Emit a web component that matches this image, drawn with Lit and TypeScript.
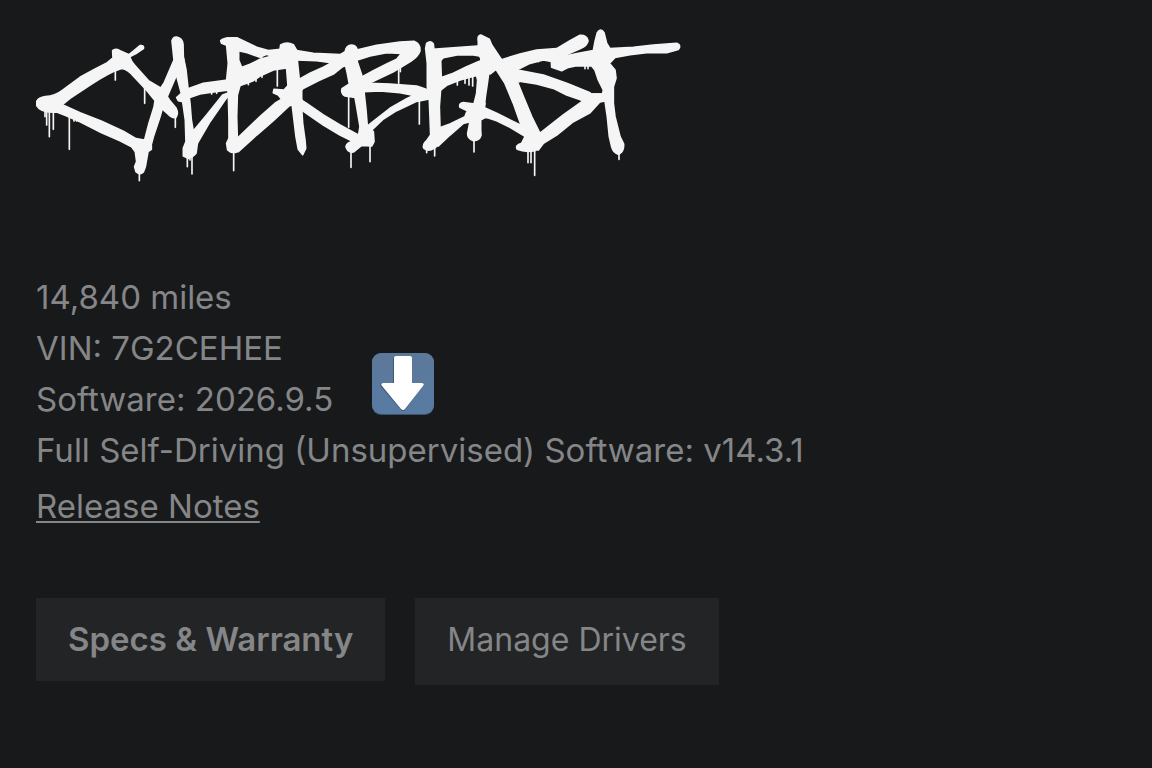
import { LitElement, html, css, svg } from "lit";
import { customElement } from "lit/decorators.js";

/* One slice of the sprayed logo: its left edge, its strokes and its paint drips [x, y1, y2]. */
interface Slice {
  x: number;
  strokes: string[];
  drips: number[][];
}

const SLICES: Slice[] = [
  {
    x: 30,
    strokes: [
      "M18 252Q20 233 46 230Q76 228 96 212L150 172L190 150L232 128L249 114L248 92Q256 84 270 92L297 104L312 92L330 77Q343 75 340 86L322 98L299 110Q304 126 314 136L355 182L397 207L418 240L438 264Q446 280 438 292Q428 296 412 280L392 262L372 238L345 205L312 170Q295 148 275 145Q240 155 180 195L120 235L97 254L150 278L215 304L280 334L318 356L343 360L364 376L364 388L354 395L346 440L340 456Q330 466 318 455L314 440L320 425L316 395L305 380L270 362L215 338L150 305L105 286L80 276Q28 280 18 252Z",
      "M426 62Q430 50 440 51Q457 54 459 72L460 112L466 150L440 164L415 222L398 262L390 290L370 350L362 380L340 375L357 310L372 262L378 225L402 190L432 120Z",
    ],
    drips: [[45, 270, 290], [50, 275, 315], [58, 275, 350], [70, 272, 328], [118, 285, 388], [132, 290, 303], [140, 290, 303], [256, 140, 180], [344, 200, 250], [436, 288, 322], [328, 455, 482], [472, 405, 440], [480, 405, 420], [486, 402, 462]],
  },
  {
    x: 160,
    strokes: [
      "M48 115L70 112L78 150L84 205L90 250L94 300L100 335L112 370L108 400Q96 414 85 415L70 408L70 385L78 365L76 300L68 245L55 242L50 233L64 220L56 190L48 160Z",
      "M82 207L130 190L203 180L215 210L190 212L150 217L120 222L85 234Z",
      "M188 225L215 215L195 240L150 305L112 370L85 400L82 350L100 333L140 285Z",
      "M182 62Q190 52 232 54L236 90L236 120L245 143L240 196L232 225L230 290L232 355L245 382L232 395Q215 402 203 390L200 370L207 355L207 300L205 222L200 180L205 130L200 76L185 70Z",
      "M200 54L232 54L262 68L290 82L325 92L362 88L375 110L336 108L320 103L308 108L300 112L262 98L225 90Z",
      "M240 144L270 133L300 118L336 108L375 95L410 92L400 146L380 144L340 150L300 168L280 182L260 190L230 200L215 150Z",
      "M232 355L300 290L345 250L365 238L355 225L340 218L342 208L372 210L400 180L425 240L398 255L388 257L340 302L290 345L235 395Z",
      "M360 88L362 75Q380 64 400 74L412 95L412 122L418 180L425 215L425 265L428 310L435 360L437 385L428 404L415 388L408 350L402 300L396 250L385 210L380 146Z",
    ],
    drips: [[221, 392, 452], [352, 146, 198], [305, 108, 126], [265, 180, 194], [288, 170, 184], [306, 160, 172], [155, 212, 222], [170, 212, 220]],
  },
  {
    x: 290,
    strokes: [
      "M10 90L70 100L150 104L175 90L185 130L158 140L130 162L85 182L38 206L22 230L20 182L60 160L100 142L125 128L80 122L20 120Z",
      "M22 232L50 250L100 285L150 315L205 345L200 370L150 345L100 315L35 270L10 240Z",
      "M166 95Q168 76 185 75Q200 76 202 92L200 120L215 165L222 215L228 270L232 320L250 335L252 365L245 378L215 376L190 396Q172 398 168 380Q170 368 188 364L205 350L210 320L200 260L195 232L165 228Q152 220 156 206L178 192L172 160L165 130Z",
      "M180 85L200 90L260 76L330 66L372 64Q392 72 390 92Q385 108 362 124L310 155L250 184L232 192L205 190L210 174L250 152L290 132L320 118L335 100L290 98L240 108L195 122Z",
      "M200 190L235 190L300 192L380 198L415 210L425 235L380 244L320 272L280 297L240 335L225 350L220 328L245 308L300 265L350 236L372 226L330 218L270 213L205 216Z",
    ],
    drips: [[176, 228, 322], [183, 390, 442], [240, 372, 425], [388, 240, 312], [331, 115, 155], [326, 140, 190]],
  },
  {
    x: 410,
    strokes: [
      "M47 85L50 70Q62 60 70 72L72 90L92 120L94 180L92 205L88 260L90 325L85 375L72 385Q55 396 42 385Q36 374 50 362L62 345L60 290L58 240L52 200L52 130Z",
      "M68 88L120 84L203 78L220 90L216 118L208 108L190 105L145 104L100 113L88 125L70 120Z",
      "M90 174L130 160L170 140L208 124L230 118L250 120L235 155L200 166L150 180L110 196L90 212Z",
      "M85 325L120 312L165 290L172 272L150 262Q145 250 160 248L195 252L225 250L222 268L232 288L212 300L212 330L213 345Q210 360 190 362Q172 356 173 340L180 305L160 310L120 345L85 378Z",
      "M198 160L238 145L232 190L226 230L222 268L235 290L195 280L192 252L200 220L203 180Z",
      "M205 65Q202 46 212 45L238 58L245 75L275 120L300 150L320 180L340 230L365 290L388 336L400 365L375 392Q345 398 322 388Q314 376 335 370L345 350L335 320L310 250L285 190L258 148L240 162L215 150L212 112L205 80Z",
      "M220 262L260 280L300 300L345 322L350 352L300 322L260 302L235 294L205 290Z",
      "M272 120L330 102L380 90L440 86L480 62L510 46Q530 45 534 62Q532 78 510 86L460 108L450 140L424 124L400 120L360 130L320 150L290 155Z",
      "M285 150L330 152L400 165L470 190L540 218L540 240L520 242L470 225L430 205L380 192L318 182L290 165Z",
    ],
    drips: [[50, 385, 398], [74, 380, 408], [142, 180, 195], [165, 175, 190], [177, 170, 195], [188, 165, 198], [192, 360, 396], [317, 175, 186], [327, 175, 186], [354, 388, 428], [363, 388, 428], [374, 388, 466], [385, 115, 125]],
  },
  {
    x: 520,
    strokes: [
      "M190 242L130 285L65 336L40 350L35 390L55 390L70 370L110 345L160 305L210 278L240 245L255 243L258 222L215 222L150 195L140 215Z",
      "M220 92L225 65L232 38Q242 22 252 38L260 70L270 86L340 82L400 75L470 70Q485 76 475 88L440 98L380 98L330 104L285 112L268 130L285 150L288 175L280 200L280 250L285 290L300 350L311 372Q312 395 296 403Q280 400 275 380L268 350L262 290L255 243L240 245L210 240L210 222L248 222L250 210L235 180L225 150L215 138L170 137L145 142L125 152L95 142L94 122L120 110L135 108L175 100Z",
    ],
    drips: [[297, 400, 418], [195, 135, 146], [204, 135, 146]],
  },
];

@customElement("cyber-logo")
export class CyberLogo extends LitElement {
  static styles = css`
    :host { display: block; }
    .logo { display: block; width: 100%; height: auto; }
    .slice { fill: #f5f5f6; stroke: #f5f5f6; stroke-width: 5; stroke-linejoin: round; }
    .drip { stroke-width: 5; stroke-linecap: round; }
  `;

  render() {
    return html`
      <svg class="logo" viewBox="36 24 648 160" role="img" aria-label="Cyberbeast">
        ${SLICES.map(
          (s) => svg`<g class="slice" transform="translate(${s.x} 20) scale(0.33333)">
            ${s.strokes.map((d) => svg`<path d=${d} />`)}
            ${s.drips.map(([x, a, b]) => svg`<path class="drip" d="M${x} ${a}V${b}" />`)}
          </g>`
        )}
      </svg>
    `;
  }
}

@customElement("app-root")
export class AppRoot extends LitElement {
  static styles = css`
    :host {
      display: block;
      box-sizing: border-box;
      min-height: 100vh;
      padding: 24px 36px;
      background: #18191b;
      color: #858688;
      font-family: Inter, Roboto, "Liberation Sans", sans-serif;
      font-size: 33px;
      line-height: 51px;
    }
    .mark { max-width: 648px; }
    .info { margin-top: 88px; }
    .summary { display: flex; align-items: flex-end; gap: 39px; }
    .line { margin: 0; }
    .badge { flex: none; width: 62px; height: 62px; margin-bottom: 10px; }
    .notes { display: inline-block; margin-top: 5px; color: inherit; text-decoration-thickness: 2px; text-underline-offset: 3px; }
    .actions { display: flex; flex-wrap: wrap; align-items: flex-start; gap: 30px; margin-top: 66px; }
    .action {
      border: 0;
      padding: 16px 32px;
      background: #232426;
      color: inherit;
      font: inherit;
      cursor: pointer;
    }
    .strong { font-weight: 600; }
    .tall { padding-bottom: 20px; font-size: 32px; }
  `;

  render() {
    return html`
      <main>
        <cyber-logo class="mark"></cyber-logo>
        <section class="info">
          <div class="summary">
            <div>
              <p class="line">14,840 miles</p>
              <p class="line">VIN: 7G2CEHEE</p>
              <p class="line">Software: 2026.9.5</p>
            </div>
            <svg class="badge" viewBox="0 0 62 62" role="img" aria-label="Update available">
              <defs>
                <linearGradient id="tile" x1="0" y1="0" x2="0" y2="1">
                  <stop offset="0" stop-color="#5c7899" />
                  <stop offset="1" stop-color="#587ba3" />
                </linearGradient>
              </defs>
              <rect x="0" y="0" width="62" height="62" rx="9" fill="#3b526b" />
              <rect x="0" y="0" width="62" height="61" rx="9" fill="url(#tile)" />
              <path d="M21 6Q21 4 23 4H38Q40 4 40 6V30H50Q52 32 50 34L33 57Q31 59 29 57L9 34Q7 31 10 30H21Z" fill="#3f5a79" />
              <path d="M22 5Q22 3 24 3H38Q40 3 40 5V30H50Q53 31 51 33L33 56Q31 58 29 56L10 33Q8 31 11 30H22Z" fill="#fff" />
            </svg>
          </div>
          <p class="line">Full Self-Driving (Unsupervised) Software: v14.3.1</p>
          <a class="notes" href="#release-notes">Release Notes</a>
        </section>
        <div class="actions">
          <button class="action strong" type="button">Specs &amp; Warranty</button>
          <button class="action tall" type="button">Manage Drivers</button>
        </div>
      </main>
    `;
  }
}
